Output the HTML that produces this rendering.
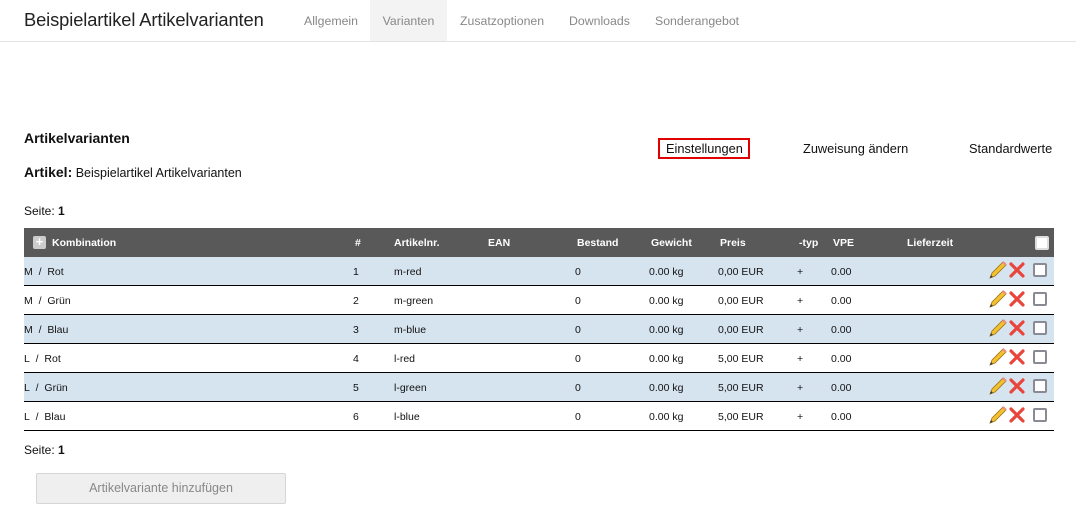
<!DOCTYPE html>
<html><head><meta charset="utf-8"><style>
*{margin:0;padding:0;box-sizing:border-box}
body{width:1076px;height:522px;background:#fff;font-family:"Liberation Sans",Arial,sans-serif;color:#111;position:relative;overflow:hidden}
.a{position:absolute;white-space:nowrap}
.top{position:absolute;left:0;top:0;width:1076px;height:42px;border-bottom:1px solid #e3e3e3}
.tab{position:absolute;top:0;height:41px;line-height:43px;font-size:12.3px;color:#888}
.hdr{position:absolute;left:24px;top:228px;width:1030px;height:29px;background:#595959;color:#fff;font-weight:bold;font-size:10.5px}
.hdr span{position:absolute;top:9px}
.row{position:absolute;left:24px;width:1030px;height:29px;border-bottom:1px solid #000;font-size:10.5px}
.row span{position:absolute;top:9px}
.b{background:#d6e4f0}
.cb{position:absolute;width:14px;height:14px;border:2px solid #8a8a94;background:#fff;border-radius:2px}
</style></head><body>
<div class="top">
<div class="a" style="left:24px;top:9px;font-size:18.3px;color:#222;letter-spacing:-0.1px">Beispielartikel Artikelvarianten</div>
<div class="tab" style="left:304px">Allgemein</div>
<div class="tab" style="left:370px;width:77px;background:#f3f3f3;text-align:center;color:#888">Varianten</div>
<div class="tab" style="left:460px">Zusatzoptionen</div>
<div class="tab" style="left:569px">Downloads</div>
<div class="tab" style="left:655px">Sonderangebot</div>
</div>
<div class="a" style="left:24px;top:130px;font-size:14px;font-weight:bold">Artikelvarianten</div>
<div class="a" style="left:24px;top:164px;font-size:12.5px"><b style="font-size:14px">Artikel:</b> Beispielartikel Artikelvarianten</div>
<div class="a" style="left:24px;top:204px;font-size:12px">Seite: <b>1</b></div>
<div class="a" style="left:658px;top:138px;width:92px;height:21px;border:2px solid #e00000;font-size:12.8px;line-height:18px;padding-left:6px">Einstellungen</div>
<div class="a" style="left:803px;top:141px;font-size:12.8px">Zuweisung ändern</div>
<div class="a" style="left:969px;top:141px;font-size:12.8px">Standardwerte</div>

<div class="hdr">
<div style="position:absolute;left:9px;top:8px;width:13px;height:13px;background:#ccc;border-radius:2px;color:#fff;font-size:13px;line-height:12px;text-align:center">+</div>
<span style="left:28px">Kombination</span><span style="left:331px">#</span><span style="left:370px">Artikelnr.</span><span style="left:464px">EAN</span><span style="left:553px">Bestand</span><span style="left:627px">Gewicht</span><span style="left:696px">Preis</span><span style="left:775px">-typ</span><span style="left:809px">VPE</span><span style="left:883px">Lieferzeit</span>
<div class="cb" style="left:1011px;top:8px;border-color:#ddd"></div>
</div>

<div class="row b" style="top:257px"><span style="left:0">M&nbsp; /&nbsp; Rot</span><span style="left:329px">1</span><span style="left:370px">m-red</span><span style="left:551px">0</span><span style="left:625px">0.00 kg</span><span style="left:694px">0,00 EUR</span><span style="left:773px">+</span><span style="left:807px">0.00</span></div>
<div class="row" style="top:286px"><span style="left:0">M&nbsp; /&nbsp; Grün</span><span style="left:329px">2</span><span style="left:370px">m-green</span><span style="left:551px">0</span><span style="left:625px">0.00 kg</span><span style="left:694px">0,00 EUR</span><span style="left:773px">+</span><span style="left:807px">0.00</span></div>
<div class="row b" style="top:315px"><span style="left:0">M&nbsp; /&nbsp; Blau</span><span style="left:329px">3</span><span style="left:370px">m-blue</span><span style="left:551px">0</span><span style="left:625px">0.00 kg</span><span style="left:694px">0,00 EUR</span><span style="left:773px">+</span><span style="left:807px">0.00</span></div>
<div class="row" style="top:344px"><span style="left:0">L&nbsp; /&nbsp; Rot</span><span style="left:329px">4</span><span style="left:370px">l-red</span><span style="left:551px">0</span><span style="left:625px">0.00 kg</span><span style="left:694px">5,00 EUR</span><span style="left:773px">+</span><span style="left:807px">0.00</span></div>
<div class="row b" style="top:373px"><span style="left:0">L&nbsp; /&nbsp; Grün</span><span style="left:329px">5</span><span style="left:370px">l-green</span><span style="left:551px">0</span><span style="left:625px">0.00 kg</span><span style="left:694px">5,00 EUR</span><span style="left:773px">+</span><span style="left:807px">0.00</span></div>
<div class="row" style="top:402px"><span style="left:0">L&nbsp; /&nbsp; Blau</span><span style="left:329px">6</span><span style="left:370px">l-blue</span><span style="left:551px">0</span><span style="left:625px">0.00 kg</span><span style="left:694px">5,00 EUR</span><span style="left:773px">+</span><span style="left:807px">0.00</span></div>

<svg class="a" style="left:0;top:0" width="1076" height="522">
<defs>
<g id="ic">
<path d="M990 278 L992 273 L1003 262 L1006 265 L995 276 Z" fill="#f2c12e" stroke="#a0701a" stroke-width="0.8"/>
<path d="M1003 262 L1006 265" stroke="#e88" stroke-width="2"/>
<path d="M990 278 L991 275 L993 277 Z" fill="#333"/>
<path d="M1011 264 L1023 276 M1023 264 L1011 276" stroke="#e8453c" stroke-width="3.2" stroke-linecap="round"/>
</g>
</defs>
<use href="#ic"/><use href="#ic" y="29"/><use href="#ic" y="58"/><use href="#ic" y="87"/><use href="#ic" y="116"/><use href="#ic" y="145"/>
</svg>
<div class="cb" style="left:1033px;top:263px"></div>
<div class="cb" style="left:1033px;top:292px"></div>
<div class="cb" style="left:1033px;top:321px"></div>
<div class="cb" style="left:1033px;top:350px"></div>
<div class="cb" style="left:1033px;top:379px"></div>
<div class="cb" style="left:1033px;top:408px"></div>

<div class="a" style="left:24px;top:443px;font-size:12px">Seite: <b>1</b></div>
<div class="a" style="left:36px;top:473px;width:250px;height:31px;background:#efefef;border:1px solid #d6d6d6;border-radius:2px;color:#888;font-size:12.5px;text-align:center;line-height:29px">Artikelvariante hinzufügen</div>
</body></html>
